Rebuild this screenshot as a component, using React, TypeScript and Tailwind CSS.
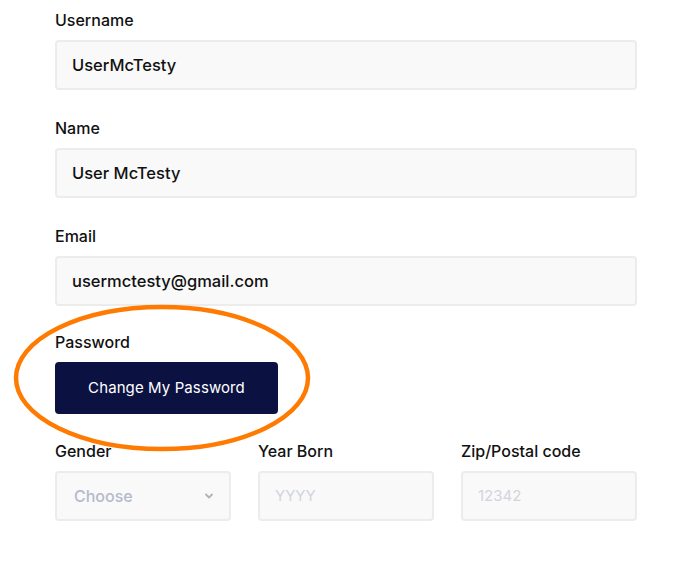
import React from 'react';

const Field: React.FC<{ label: string; value: string; className?: string }> = ({ label, value, className }) => (
  <div className={className}>
    <label className="block text-[16px] leading-6 font-medium text-[#111] mb-2">{label}</label>
    <div className="h-[50px] rounded-[4px] border-2 border-[#ececec] bg-[#f9f9f9] flex items-center px-[15px] text-[16.5px] font-medium text-[#111]">
      {value}
    </div>
  </div>
);

export default function App() {
  return (
    <div className="relative w-[682px] h-[562px] bg-white overflow-hidden" style={{ fontFamily: 'Inter, "Open Sans", sans-serif' }}>
      <div className="pl-[55px] pr-[45px] pt-2">
        <Field label="Username" value="UserMcTesty" className="mb-[26px]" />
        <Field label="Name" value="User McTesty" className="mb-[26px]" />
        <Field label="Email" value="usermctesty@gmail.com" className="mb-6" />

        <div className="mb-[25px]">
          <label className="block text-[16px] leading-6 font-medium text-[#111] mb-2">Password</label>
          <button className="w-[223px] h-[52px] rounded-[4px] bg-[#0b1241] text-white text-[15px] tracking-[0.1px]">
            Change My Password
          </button>
        </div>

        <div className="grid grid-cols-3 gap-[27px]">
          <div>
            <label className="block text-[16px] leading-6 font-medium text-[#111] mb-2">Gender</label>
            <div className="h-[50px] rounded-[4px] border-2 border-[#ececec] bg-[#f9f9f9] flex items-center justify-between pl-[17px] pr-[14px] text-[16px] font-medium text-[#b5b9cb]">
              <span>Choose</span>
              <svg width="12" height="12" viewBox="0 0 12 12" fill="none" stroke="#aeb2c2" strokeWidth="1.8" strokeLinecap="round" strokeLinejoin="round">
                <path d="M3 4.5 6 7.5 9 4.5" />
              </svg>
            </div>
          </div>
          <div>
            <label className="block text-[16px] leading-6 font-medium text-[#111] mb-2">Year Born</label>
            <div className="h-[50px] rounded-[4px] border-2 border-[#ececec] bg-[#f9f9f9] flex items-center px-[15px] text-[15px] text-[#d2d4de]">
              YYYY
            </div>
          </div>
          <div>
            <label className="block text-[16px] leading-6 font-medium text-[#111] mb-2">Zip/Postal code</label>
            <div className="h-[50px] rounded-[4px] border-2 border-[#ececec] bg-[#f9f9f9] flex items-center px-[15px] text-[15px] text-[#d2d4de]">
              12342
            </div>
          </div>
        </div>
      </div>

      <svg className="absolute left-0 top-0 pointer-events-none" width="682" height="562">
        <ellipse cx="162" cy="378" rx="146" ry="71" fill="none" stroke="#ff7a00" strokeWidth="4.5" />
      </svg>
    </div>
  );
}
